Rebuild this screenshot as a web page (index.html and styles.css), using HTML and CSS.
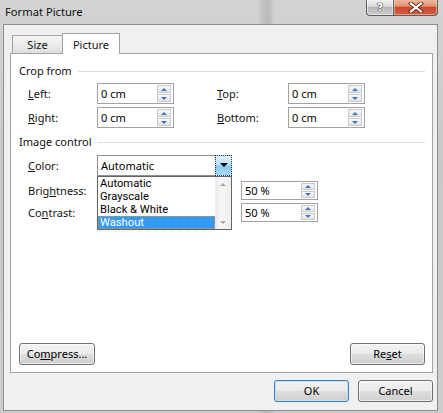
FILE: index.html
```html
<!DOCTYPE html>
<html>
<head>
<meta charset="utf-8">
<link rel="stylesheet" href="styles.css">
</head>
<body>
<div class="window">
  <div class="titlebar">
    <span class="title">Format Picture</span>
    <div class="caps">
      <div class="cap help"><span>?</span></div>
      <div class="cap close">
        <svg width="16" height="11" viewBox="0 0 16 11">
          <path d="M3 1.5 L13 9.5 M13 1.5 L3 9.5" stroke="#5b2416" stroke-width="4" stroke-linecap="square" fill="none"/>
          <path d="M3 1.5 L13 9.5 M13 1.5 L3 9.5" stroke="#ffffff" stroke-width="2.2" stroke-linecap="square" fill="none"/>
        </svg>
      </div>
    </div>
  </div>
  <div class="client">
    <div class="tabs">
      <div class="tab">Size</div>
      <div class="tab active">Picture</div>
    </div>
    <div class="panel">
      <div class="group-head"><span>Crop from</span><span class="rule"></span></div>
      <div class="crop-grid">
        <span class="lbl"><u>L</u>eft:</span>
        <div class="spin"><span class="val">0 cm</span><span class="arrows"><span class="arr up"></span><span class="arr down"></span></span></div>
        <span class="lbl"><u>T</u>op:</span>
        <div class="spin"><span class="val">0 cm</span><span class="arrows"><span class="arr up"></span><span class="arr down"></span></span></div>
        <span class="lbl"><u>R</u>ight:</span>
        <div class="spin"><span class="val">0 cm</span><span class="arrows"><span class="arr up"></span><span class="arr down"></span></span></div>
        <span class="lbl"><u>B</u>ottom:</span>
        <div class="spin"><span class="val">0 cm</span><span class="arrows"><span class="arr up"></span><span class="arr down"></span></span></div>
      </div>

      <div class="group-head image-head"><span>Image control</span><span class="rule"></span></div>
      <div class="row color-row">
        <span class="lbl"><u>C</u>olor:</span>
        <div class="select">
          <span class="val">Automatic</span>
          <span class="drop"><span class="tri"></span></span>
          <div class="list">
            <div class="items">
              <div class="item">Automatic</div>
              <div class="item">Grayscale</div>
              <div class="item">Black &amp; White</div>
              <div class="item sel">Washout</div>
            </div>
            <div class="sbar"><span class="sup"></span><span class="sdown"></span></div>
          </div>
        </div>
      </div>
      <div class="row small-row first">
        <span class="lbl">Brig<u>h</u>tness:</span>
        <span class="slot"></span>
        <div class="spin sm"><span class="val">50 %</span><span class="arrows"><span class="arr up"></span><span class="arr down"></span></span></div>
      </div>
      <div class="row small-row">
        <span class="lbl">Co<u>n</u>trast:</span>
        <span class="slot"></span>
        <div class="spin sm"><span class="val">50 %</span><span class="arrows"><span class="arr up"></span><span class="arr down"></span></span></div>
      </div>

      <div class="panel-foot">
        <button class="btn compress">Co<u>m</u>press...</button>
        <button class="btn reset">Re<u>s</u>et</button>
      </div>
    </div>
    <div class="dialog-foot">
      <button class="btn ok">OK</button>
      <button class="btn cancel">Cancel</button>
    </div>
  </div>
</div>
</body>
</html>
```

FILE: styles.css
```css
* { box-sizing: border-box; }
html, body { margin: 0; padding: 0; }
body {
  width: 443px;
  height: 413px;
  overflow: hidden;
  font-family: "Noto Sans", "Open Sans", sans-serif;
  font-size: 11px;
  color: #000;
  background: #c8c8c8;
}
u { text-decoration: underline; text-underline-offset: 1px; }

.window {
  width: 443px;
  height: 413px;
  display: flex;
  flex-direction: column;
  background:
    linear-gradient(90deg, rgba(0,0,0,0) 58%, rgba(0,0,0,0.08) 59.5%, rgba(0,0,0,0.12) 60.5%, rgba(0,0,0,0) 62%),
    linear-gradient(180deg, #d3d3d3 0%, #c9c9c9 40%, #cdcdcd 100%);
}

/* title bar */
.titlebar {
  height: 24px;
  display: flex;
  align-items: flex-start;
}
.title {
  padding-left: 5px;
  line-height: 23px;
  font-size: 11.2px;
  color: #111;
}
.caps {
  margin-left: auto;
  margin-right: 5px;
  display: flex;
  margin-top: -1px;
}
.cap {
  height: 17px;
  border: 1px solid #5f5f5f;
  border-top: none;
  display: flex;
  align-items: center;
  justify-content: center;
}
.help {
  width: 27px;
  border-right: none;
  border-radius: 0 0 0 4px;
  background: linear-gradient(180deg, #f4f4f4 0%, #dcdcdc 45%, #b9b9b9 52%, #cbcbcb 100%);
  box-shadow: inset 0 0 0 1px rgba(255,255,255,0.5);
}
.help span {
  color: #fff;
  font-family: "DejaVu Sans", sans-serif;
  font-weight: bold;
  font-size: 11px;
  line-height: 11px;
  text-shadow: 0 0 1px #333, 0 0 1px #333, 0 0 1px #333;
}
.close {
  width: 45px;
  border-radius: 0 0 4px 0;
  background: linear-gradient(180deg, #efbca8 0%, #e39274 45%, #c94a2d 52%, #d5603f 100%);
  box-shadow: inset 0 0 0 1px rgba(255,220,200,0.5);
}

/* client */
.client {
  flex: 1;
  margin: 0 5px 2px 3px;
  border: 1px solid #8e8e8e;
  background: #f0f0f0;
  padding: 8px 4px 8px 6px;
  display: flex;
  flex-direction: column;
}

.tabs {
  display: flex;
  align-items: flex-end;
  height: 20px;
  padding-left: 2px;
  position: relative;
  z-index: 2;
}
.tab {
  width: 51px;
  height: 18px;
  border: 1px solid #a3a3a3;
  border-bottom: none;
  background: linear-gradient(180deg, #f4f4f4 0%, #ececec 50%, #dedede 100%);
  text-align: center;
  line-height: 18px;
  color: #111;
}
.tab.active {
  width: 58px;
  height: 21px;
  margin-left: -1px;
  margin-bottom: -1px;
  background: #fff;
  line-height: 21px;
}

.panel {
  flex: 1;
  background: #fff;
  border: 1px solid #a3a3a3;
  padding: 10px 7px 7px 8px;
  display: flex;
  flex-direction: column;
  position: relative;
  z-index: 1;
}

.group-head {
  display: flex;
  align-items: center;
  height: 14px;
  gap: 6px;
  line-height: 14px;
  color: #111;
}
.group-head .rule {
  flex: 1;
  height: 1px;
  background: #dcdcdc;
}
.image-head { margin-top: 7px; }

.lbl { color: #111; white-space: nowrap; }

.crop-grid {
  display: grid;
  grid-template-columns: 69px 120px 71px 77px;
  grid-auto-rows: 21px;
  row-gap: 3px;
  margin: 5px 0 0 9px;
  align-items: center;
}

.spin {
  width: 77px;
  height: 21px;
  border: 1px solid #a2a2a2;
  background: #fff;
  display: flex;
  align-items: center;
}
.spin .val {
  flex: 1;
  padding-left: 3px;
  line-height: 14px;
}
.spin .arrows {
  width: 14px;
  display: flex;
  flex-direction: column;
  gap: 1px;
  margin-right: 2px;
}
.arr {
  height: 8px;
  border: 1px solid #c9c9c9;
  background: linear-gradient(180deg, #f8f8f8 0%, #e4e4e4 100%);
  display: flex;
  align-items: center;
  justify-content: center;
}
.arr::after {
  content: "";
  width: 0;
  height: 0;
  border-left: 3px solid transparent;
  border-right: 3px solid transparent;
}
.arr.up::after { border-bottom: 3px solid #3d78c4; }
.arr.down::after { border-top: 3px solid #3d78c4; }

.spin.sm { height: 19px; }
.spin.sm .arr { height: 7px; }

.row {
  display: flex;
  align-items: center;
  margin-left: 9px;
}
.row .lbl { width: 69px; }
.color-row { margin-top: 6px; height: 21px; }
.small-row { height: 19px; margin-top: 3px; }
.small-row.first { margin-top: 5px; }
.slot { width: 144px; }

.select {
  width: 135px;
  height: 21px;
  border: 1px solid #8f8f8f;
  background: #fff;
  display: flex;
  position: relative;
}
.select .val {
  flex: 1;
  padding-left: 3px;
  line-height: 19px;
}
.select .drop {
  width: 17px;
  height: 21px;
  margin: -1px -1px -1px 0;
  border: 1px dotted #1d3b5a;
  background: linear-gradient(180deg, #e3f2fd 0%, #bde0f8 45%, #8ec8f1 55%, #a9d6f5 100%);
  display: flex;
  align-items: center;
  justify-content: center;
}
.tri {
  width: 0;
  height: 0;
  border-left: 4px solid transparent;
  border-right: 4px solid transparent;
  border-top: 4px solid #000;
  margin-top: -2px;
}

.list {
  position: absolute;
  left: -1px;
  top: 20px;
  width: 135px;
  height: 54px;
  border: 1px solid #646464;
  background: #fff;
  display: flex;
  z-index: 5;
}
.items { flex: 1; }
.item {
  height: 13px;
  line-height: 13px;
  padding-left: 2px;
  color: #000;
  font-family: Roboto, "Noto Sans", sans-serif;
  font-size: 11.2px;
  overflow: hidden;
}
.item.sel {
  background: #3399ff;
  color: #fff;
  outline: 1px dotted #d9954c;
  outline-offset: -1px;
}
.sbar {
  width: 16px;
  background: linear-gradient(90deg, #e9e9e9 0%, #f6f6f6 40%, #eeeeee 100%);
  display: flex;
  flex-direction: column;
  justify-content: space-between;
  align-items: center;
  padding: 6px 0 5px;
}
.sup, .sdown {
  width: 0;
  height: 0;
  border-left: 3px solid transparent;
  border-right: 3px solid transparent;
}
.sup { border-bottom: 3px solid #a5a5a5; }
.sdown { border-top: 3px solid #a5a5a5; }

.panel-foot {
  margin-top: auto;
  display: flex;
  justify-content: space-between;
}

.btn {
  height: 22px;
  border: 1px solid #707070;
  border-radius: 3px;
  background: linear-gradient(180deg, #f2f2f2 0%, #ebebeb 48%, #dddddd 52%, #cfcfcf 100%);
  box-shadow: inset 0 0 0 1px rgba(255,255,255,0.6);
  font: inherit;
  color: #000;
  padding: 0;
  text-align: center;
  line-height: 18px;
}
.compress { width: 76px; }
.reset { width: 75px; }

.dialog-foot {
  margin-top: 7px;
  display: flex;
  justify-content: flex-end;
  gap: 9px;
}
.ok, .cancel { width: 75px; }
.ok {
  border-color: #3c7fb1;
  box-shadow: inset 0 0 0 1px #bfe4f9;
}
```
